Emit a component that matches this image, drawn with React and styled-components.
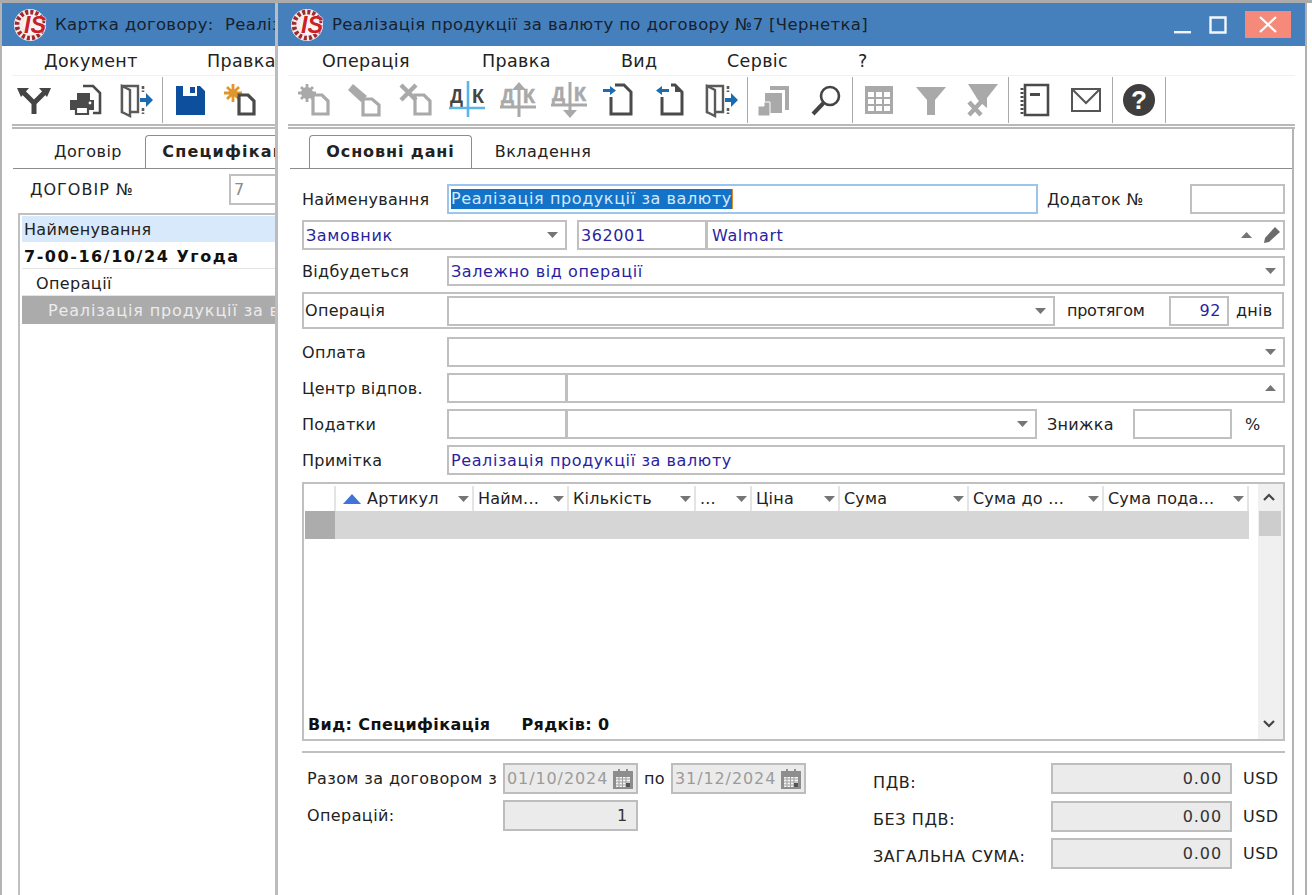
import React from "react";
import styled, { createGlobalStyle } from "styled-components";

const Global = createGlobalStyle`
  html, body { margin: 0; padding: 0; background: #fff; }
  body { font-family: "DejaVu Sans", Verdana, sans-serif; font-size: 16px; letter-spacing: .4px; color: #222; }
  * { box-sizing: border-box; }
`;

const Desktop = styled.div`
  position: relative; width: 1312px; height: 895px; overflow: hidden; background: #fff;
  border-top: 3px solid #ababab;
`;
const Window = styled.section`
  position: absolute; top: 0; bottom: -4px;
  left: ${p => p.$left}px; width: ${p => p.$width}px;
  background: #fff;
  border-left: ${p => p.$edgeW || 2}px solid ${p => p.$edge};
  ${p => p.$front ? "border-right: 2px solid #b0b0b0;" : ""}
  display: flex; flex-direction: column; overflow: hidden;
`;
const TitleBar = styled.header`
  height: 43px; background: #4680bc; display: flex; align-items: center; flex: none;
  padding-left: ${p => p.$pad}px; gap: 7px; color: #18212c; font-size: 16.5px; white-space: nowrap; overflow: hidden;
  letter-spacing: .35px;
`;
const TitleText = styled.span`flex: 1; min-width: 0; overflow: hidden;`;
const WinControls = styled.div`display: flex; align-items: center; margin-right: 14px; flex: none;`;
const WinBtn = styled.div`
  width: ${p => p.$w || 36}px; height: 27px; display: flex; align-items: center; justify-content: center;
  background: ${p => p.$bg || "transparent"};
  margin-left: ${p => p.$ml || 0}px;
`;
const MenuBar = styled.nav`
  height: 29px; flex: none; display: flex; align-items: center; position: relative;
  padding-left: ${p => p.$pad}px; font-size: 17.5px; white-space: nowrap; overflow: hidden;
  letter-spacing: .35px;
`;
const MenuItem = styled.span`
  width: ${p => p.$w}px; flex: none;
`;
const ToolRow = styled.div`
  margin: 0 ${p => p.$end || 0}px 0 ${p => p.$inset}px; flex: none; height: 54px; display: flex; align-items: center;
  border-top: 1px solid #f0f0f0;
  border-bottom: 5px double #b8b8b8;
  overflow: hidden; white-space: nowrap;
`;
const Tool = styled.div`
  width: ${p => p.$w || 51}px; height: 44px; display: flex; align-items: center; justify-content: center; flex: none;
`;
const ToolSep = styled.div`width: 1px; height: 46px; background: #a9a9a9; flex: none; margin: 0 ${p => p.$m || 0}px;`;
const Panel = styled.div`
  margin: 0 ${p => p.$end || 0}px 0 ${p => p.$inset}px; flex: 1; min-height: 0;
  ${p => p.$right ? "border-right: 2px solid #b4b4b4;" : ""}
  display: flex; flex-direction: column;
`;
const Tabs = styled.div`
  display: flex; align-items: flex-end; height: 35px; margin: 5px 0 0 ${p => p.$ml || 0}px; flex: none;
  padding-left: ${p => p.$pad}px; border-bottom: 1.5px solid #8c8c8c; position: relative; overflow: hidden;
`;
const Tab = styled.div`
  height: ${p => p.$on ? 35 : 32}px; width: ${p => p.$w}px; flex: none;
  font-weight: ${p => p.$on ? 700 : 400}; display: flex; align-items: center; justify-content: center;
  padding: 0 0 1px ${p => p.$pl || 0}px;
  letter-spacing: ${p => p.$ls || (p.$on ? ".9px" : ".5px")}; white-space: nowrap; overflow: hidden;
  ${p => p.$on ? "background:#fff; border:1.5px solid #8c8c8c; border-bottom:2px solid #fff; border-radius:4px 4px 0 0; margin-bottom:-1.5px;" : ""}
`;

const Form = styled.div`
  padding: 15px 7px 0 13px; display: flex; flex-direction: column; flex: 1;
`;
const Row = styled.div`
  display: grid; grid-template-columns: ${p => p.$cols}; height: 30px; margin-bottom: 6px;
  align-items: center; flex: none;
`;
const Label = styled.label`
  white-space: nowrap; padding-left: ${p => p.$pad || 0}px; letter-spacing: ${p => p.$ls || ".3px"};
`;
const Box = styled.div`
  height: 30px; border: 2px solid ${p => p.$focus ? "#9cc4ec" : "#c0c0c0"};
  ${p => p.$joined ? "border-left-width: 1px; padding-left: 4px !important;" : ""}
  display: flex; align-items: center; justify-content: ${p => p.$right ? "flex-end" : "flex-start"};
  padding: 0 ${p => p.$pr ?? 2}px 0 2px; color: #2a1fa0; white-space: nowrap; overflow: hidden; position: relative;
  letter-spacing: .6px;
`;
const BoxText = styled.span`flex: 1; min-width: 0;`;
const Selected = styled.span`background: #1273c9; color: #d6e9fb; height: 20px; line-height: 19px; border-right: 1px solid #e08a2e;`;
const Caret = styled.svg`width: 11px; height: 6px; flex: none; margin-right: ${p => p.$mr ?? 5}px; fill: #757575;`;
const Group = styled.div`
  height: 37px; border: 2px solid #c0c0c0; margin: 0 1px 8px 0; flex: none;
  display: grid; grid-template-columns: 143px 608px 114px 60px 1fr; align-items: center;
`;
const GroupLabel = styled.span`padding-left: 1px; letter-spacing: .3px;`;

const Table = styled.div`
  height: 259px; margin-top: 1px; border: 2px solid #c0c0c0; flex: none; display: grid; grid-template-columns: 1fr 25px; position: relative;
`;
const TableMain = styled.div`display: flex; flex-direction: column; padding: 2px 0 0 0; min-width: 0;`;
const HeadRow = styled.div`
  display: grid; grid-template-columns: 32px 138px 95px 127px 56px 88px 129px 135px 1fr; height: 25px; flex: none; padding-right: 9px;
  letter-spacing: .2px;
`;
const HeadCell = styled.div`
  display: flex; align-items: center; padding-left: ${p => p.$pad ?? 4}px; border-right: 2px solid #e4e4e4; white-space: nowrap; overflow: hidden; gap: ${p => p.$gap || 0}px;
`;
const HeadText = styled.span`flex: 1; min-width: 0;`;
const DataRow = styled.div`height: 28px; margin: 0 9px 0 1px; background: #d6d6d6; flex: none;`;
const RowMark = styled.div`width: 30px; height: 100%; background: #acacac;`;
const TableFoot = styled.div`
  margin-top: auto; height: 30px; padding: 0 0 0 4px; display: flex; gap: 31px; align-items: center; font-weight: 700; letter-spacing: .4px; color: #111;
`;
const Scroll = styled.div`
  background: #f0f0f0; display: flex; flex-direction: column; align-items: center; justify-content: space-between; padding: 0 3px 3px 0; position: relative;
`;
const ScrollBtn = styled.div`height: 25px; display: flex; align-items: center; justify-content: center; flex: none;`;
const ScrollThumb = styled.div`position: absolute; top: 27px; left: 1px; width: 22px; height: 25px; background: #cdcdcd;`;
const Divider = styled.hr`margin: 10px 0 10px; border: 0; height: 2px; background: #c0c0c0; width: 100%; flex: none;`;

const Summary = styled.div`display: grid; grid-template-columns: 571px 1fr; flex: none;`;
const SumLeft = styled.div`display: flex; flex-direction: column; gap: 6px; padding-left: 5px;`;
const SumRow = styled.div`display: flex; align-items: center; height: 31px;`;
const SumLabel = styled.span`width: 196px; flex: none; white-space: nowrap;`;
const SumMid = styled.span`width: 33px; flex: none; text-align: center;`;
const Ro = styled.div`
  width: ${p => p.$w || 135}px; height: 31px; background: #ebebeb; border: 2px solid #bdbdbd; flex: none;
  display: flex; align-items: center; justify-content: ${p => p.$date ? "space-between" : "flex-end"};
  padding: 0 ${p => p.$date ? 3 : 8}px 0 2px; color: ${p => p.$dim ? "#9b9b9b" : "#333"}; letter-spacing: .9px;
`;
const SumRight = styled.div`display: flex; flex-direction: column; gap: 6.5px;`;
const SumRightRow = styled.div`display: grid; grid-template-columns: 178px 181px 1fr; height: 31px; align-items: center;`;
const SumRLabel = styled.span`padding-top: ${p => p.$pt ?? 7}px; white-space: nowrap; letter-spacing: .6px;`;
const Usd = styled.span`padding-left: 11px; letter-spacing: .5px;`;

/* back window */
const BackForm = styled.div`display: flex; flex-direction: column; flex: 1; padding: 0 0 0 16px; white-space: nowrap; overflow: hidden;`;
const BackRow = styled.div`display: flex; align-items: center; height: 31px; margin-top: 5px; flex: none;`;
const BackLabel = styled.span`width: 211px; flex: none; padding-left: 12px; letter-spacing: 1px;`;
const BackInput = styled.div`width: 100px; height: 31px; flex: none; border: 2px solid #c0c0c0; color: #8a8a8a; padding: 3px; line-height: 22px;`;
const BackTree = styled.div`margin-top: 8px; border: 2px solid #c0c0c0; border-width: 2px 0 0 2px; flex: 1; display: flex; flex-direction: column; padding: 1px 0 0 2px;`;
const TreeHead = styled.div`height: 26px; background: #d8e9fb; display: flex; align-items: center; padding-left: 2px; flex: none; letter-spacing: .3px;`;
const TreeRow = styled.div`
  height: 27px; display: flex; align-items: center; flex: none; padding: 2px 0 0 ${p => p.$pad}px; border-bottom: 1px solid #e4e4e4;
  ${p => p.$bold ? "font-weight:700; color:#111; letter-spacing:1.55px;" : ""}
`;
const TreeSel = styled.div`
  height: 28px; background: #ababab; color: #ececec; display: flex; align-items: center; padding: 1px 0 0 26px; flex: none; letter-spacing: .85px;
`;

const Logo = () => (
  <svg width="34" height="34" viewBox="0 0 34 34" style={{ flex: "none" }}>
    <circle cx="16" cy="17" r="16" fill="#f4ecec" />
    <circle cx="16" cy="17" r="13" fill="none" stroke="#9c2a2e" strokeWidth="4.6" strokeDasharray="3 2.1" />
    <circle cx="19" cy="17" r="10" fill="#f8f4f4" />
    <text x="10" y="25" fontFamily="Liberation Sans" fontWeight="700" fontStyle="italic" fontSize="23" letterSpacing="0" textLength="22" lengthAdjust="spacingAndGlyphs" fill="#cc2029" stroke="#fff" strokeWidth=".6" paintOrder="stroke">IS</text>
  </svg>
);

const Doc = ({ c = "#4a4a4a", x = 16, y = 12, w = 15, h = 19 }) => (
  <path d={`M${x} ${y}h${w - 6}l6 6v${h - 6}h-${w}z`} fill="none" stroke={c} strokeWidth="3.2" />
);
const Ic = ({ children }) => <svg width="34" height="34" viewBox="0 0 34 34" overflow="visible">{children}</svg>;

const G = "#a9a9a9";
const IcFork = () => <Ic><path d="M17 31V20L6 9M17 20L28 9" fill="none" stroke="#444" strokeWidth="5" /><path d="M0 5h12l-8 9zM34 5H22l8 9z" fill="#444" /></Ic>;
const IcPrint = () => <Ic><path d="M15 3h10l7 7v20h-7" fill="none" stroke="#4a4a4a" strokeWidth="2.6" /><path d="M9 17V10h13v7zM2 17h24v10H2z" fill="#4a4a4a" /><path d="M8 24h12v7H8z" fill="#fff" stroke="#4a4a4a" strokeWidth="2.2" /><circle cx="22" cy="20" r="1.4" fill="#fff" /></Ic>;
const IcExit = () => <Ic><path d="M2 3h16v26H2z" fill="none" stroke="#5a5a5a" strokeWidth="2.4" /><path d="M2 3l8 4v26l-8-4z" fill="#fff" stroke="#5a5a5a" strokeWidth="2.4" /><path d="M23 3v6M23 25v6" stroke="#5a5a5a" strokeWidth="2.6" strokeDasharray="3 1.5" /><path d="M20 15h6v-5l7 7-7 7v-5h-6z" fill="#1c6bb0" /></Ic>;
const IcSave = () => <Ic><path d="M3 3h7v10h14V3h3l5 5v24H3z" fill="#0d4f9c" /><path d="M17 4h5v6h-5z" fill="#0d4f9c" /></Ic>;
const Star = ({ c }) => <g stroke={c} strokeWidth="2.8"><path d="M10 1v18M1 10h18M4 4l12 12M16 4L4 16" /></g>;
const IcNewStar = () => <Ic><Star c="#e0962a" /><circle cx="10" cy="10" r="3.5" fill="#e0962a" /><Doc /></Ic>;
const IcAdd = () => <Ic><Star c={G} /><circle cx="10" cy="10" r="6" fill={G} /><Doc c={G} /></Ic>;
const IcEdit = () => <Ic><path d="M5 1L0 7l13 12 6-6z" fill={G} /><path d="M15 16h9l7 6v10H15z" fill="none" stroke={G} strokeWidth="3.2" /></Ic>;
const IcDel = () => <Ic><path d="M2 2l15 15M17 2L2 17" stroke={G} strokeWidth="4.4" /><Doc c={G} /></Ic>;

const DkText = styled.text`font-family: "Liberation Sans", sans-serif; font-weight: 700; font-size: 20px; letter-spacing: 0;`;
const DkPair = ({ c, y, s }) => <><DkText x="0" y={y} fill={c} stroke={s} strokeWidth=".6" textLength="13" lengthAdjust="spacingAndGlyphs">Д</DkText><DkText x="22" y={y} fill={c} stroke={s} strokeWidth=".6" textLength="12" lengthAdjust="spacingAndGlyphs">К</DkText></>;
const IcDk = () => <Ic><DkPair c="#444" y="20" /><path d="M18 -2v36M-1 25h36" stroke="#5bb5e6" strokeWidth="2.6" /></Ic>;
const IcDkUp = () => <Ic><DkPair c={G} s={G} y="20" /><path d="M18 3v31M-1 24h36" stroke={G} strokeWidth="3" /><path d="M11 7l7-8 7 8z" fill={G} /></Ic>;
const IcDkDown = () => <Ic><DkPair c={G} s={G} y="18" /><path d="M18 -1v30M-1 22h36" stroke={G} strokeWidth="3" /><path d="M11 27l7 8 7-8z" fill={G} /></Ic>;
const DocOpen = ({ d }) => <path d={d} fill="none" stroke="#4a4a4a" strokeWidth="3" />;
const IcImp = () => <Ic><DocOpen d="M8 14v17h20V9l-7-7h-9" /><path d="M0 6h7V3l6 4.5L7 12V9H0z" fill="#1c6bb0" /></Ic>;
const IcExp = () => <Ic><DocOpen d="M8 14v17h20V9l-7-7h-4" /><path d="M21 9l7 0-7-7z" fill="#4a4a4a" /><path d="M15 6H8V3L2 7.5 8 12V9h7z" fill="#1c6bb0" /></Ic>;
const IcCopy = () => <Ic><path d="M13 3h19v24h-4V7H13z" fill={G} /><path d="M8 10h17v20H8z" fill={G} /><path d="M1 23h6v-4h6v14H1z" fill={G} stroke="#fff" /></Ic>;
const IcFind = () => <Ic><circle cx="21" cy="13" r="9" fill="none" stroke="#444" strokeWidth="2.6" /><path d="M14.5 20L4 31" stroke="#444" strokeWidth="4" /></Ic>;
const IcTable = () => <Ic><path d="M3 3h28v28H3z" fill={G} /><path d="M6 9h6v5H6zM14 9h6v5h-6zM22 9h6v5h-6zM6 16h6v5H6zM14 16h6v5h-6zM22 16h6v5h-6zM6 23h6v5H6zM14 23h6v5h-6zM22 23h6v5h-6z" fill="#fff" /></Ic>;
const IcFilter = () => <Ic><path d="M2 4h30L21 17v15h-8V17z" fill={G} /></Ic>;
const IcNoFilter = () => <Ic><path d="M3 1h30L22 15v10l-6-5-3-3z" fill={G} /><path d="M4 19l12 13M16 19L4 32" stroke={G} strokeWidth="4.4" /></Ic>;
const IcNote = () => <Ic><path d="M7 2h23v30H7z" fill="none" stroke="#4a4a4a" strokeWidth="2.6" /><path d="M12 10h10v3H12z" fill="#4a4a4a" /><path d="M4 5v26" stroke="#4a4a4a" strokeWidth="3" strokeDasharray="2 2" /></Ic>;
const IcMail = () => <Ic><path d="M3 6h28v22H3z" fill="none" stroke="#555" strokeWidth="2" /><path d="M3 6l14 14L31 6" fill="none" stroke="#555" strokeWidth="2" /></Ic>;
const HelpMark = styled.text`font-family: "Liberation Sans", sans-serif; font-weight: 700; font-size: 26px; letter-spacing: 0;`;
const IcHelp = () => <Ic><circle cx="17" cy="17" r="16" fill="#3e3e3e" /><HelpMark x="17" y="26" textAnchor="middle" fill="#fff">?</HelpMark></Ic>;
const IcCal = () => <svg width="20" height="20" viewBox="0 0 20 20"><path d="M0 2h20v18H0z" fill="#8d8d8d" /><path d="M3 8h14v10H3z" fill="#f4f4f4" /><path d="M3 10h14M3 13h14M3 16h14M6 8v10M9.5 8v10M13 8v10" stroke="#a0a0a0" /><path d="M13 14h4v4h-4z" fill="#555" /><path d="M5 0h2v4H5zM13 0h2v4h-2z" fill="#8d8d8d" /></svg>;
const IcPencil = () => <svg width="18" height="18" viewBox="0 0 18 18"><path d="M12 1l5 5L6 16l-5 1 1-5z" fill="#6b6b6b" /></svg>;
const Down = p => <Caret viewBox="0 0 11 6" {...p}><path d="M0 0h11L5.5 6z" /></Caret>;
const Up = p => <Caret viewBox="0 0 11 6" {...p}><path d="M0 6h11L5.5 0z" /></Caret>;

const BackMenu = [["Документ", 163], ["Правка", 68]];
const FrontMenu = [["Операція", 160], ["Правка", 139], ["Вид", 106], ["Сервіс", 131], ["?", 30]];
const Cols = ["Найм...", "Кількість", "...", "Ціна", "Сума", "Сума до ...", "Сума пода..."];

export default function App() {
  return (
    <>
      <Global />
      <Desktop>
        <Window $left={0} $width={277} $edge="#b4b4b4">
          <TitleBar $pad={12}>
            <Logo />
            <TitleText>Картка договору:&nbsp; Реаліз</TitleText>
          </TitleBar>
          <MenuBar $pad={42}>
            {BackMenu.map(([t, w]) => <MenuItem key={t} $w={w}>{t}</MenuItem>)}
          </MenuBar>
          <ToolRow $inset={10}>
            <Tool $w={44}><IcFork /></Tool>
            <Tool $w={58}><IcPrint /></Tool>
            <Tool $w={46}><IcExit /></Tool>
            <ToolSep $m={2} />
            <Tool $w={50}><IcSave /></Tool>
            <Tool $w={50}><IcNewStar /></Tool>
          </ToolRow>
          <Panel $inset={0}>
            <Tabs $pad={10} $ml={11}>
              <Tab $w={122} $pl={8}>Договір</Tab>
              <Tab $w={158} $on $ls="1.2px">Специфікац</Tab>
            </Tabs>
            <BackForm>
              <BackRow>
                <BackLabel>ДОГОВІР №</BackLabel>
                <BackInput>7</BackInput>
              </BackRow>
              <BackTree>
                <TreeHead>Найменування</TreeHead>
                <TreeRow $bold $pad={2}>7-00-16/10/24 Угода</TreeRow>
                <TreeRow $pad={14}>Операції</TreeRow>
                <TreeSel>Реалізація продукції за в</TreeSel>
              </BackTree>
            </BackForm>
          </Panel>
        </Window>

        <Window $left={275} $width={1032} $edge="#bcbcbc" $edgeW={3} $front>
          <TitleBar $pad={13}>
            <Logo />
            <TitleText>Реалізація продукції за валюту по договору №7 [Чернетка]</TitleText>
            <WinControls>
              <WinBtn><svg width="17" height="18" viewBox="0 0 17 18"><path d="M0 15h17v2.4H0z" fill="#f2f6fa" /></svg></WinBtn>
              <WinBtn><svg width="18" height="18" viewBox="0 0 18 18"><path d="M1.5 1.5h15v15h-15z" fill="none" stroke="#f2f6fa" strokeWidth="2.4" /></svg></WinBtn>
              <WinBtn $w={46} $ml={9} $bg="#f58a7b"><svg width="18" height="17" viewBox="0 0 18 17"><path d="M1 1l16 15M17 1L1 16" stroke="#fff" strokeWidth="2.2" /></svg></WinBtn>
            </WinControls>
          </TitleBar>
          <MenuBar $pad={44}>
            {FrontMenu.map(([t, w]) => <MenuItem key={t} $w={w}>{t}</MenuItem>)}
          </MenuBar>
          <ToolRow $inset={10} $end={10}>
            <Tool><IcAdd /></Tool>
            <Tool><IcEdit /></Tool>
            <Tool><IcDel /></Tool>
            <Tool><IcDk /></Tool>
            <Tool><IcDkUp /></Tool>
            <Tool><IcDkDown /></Tool>
            <Tool><IcImp /></Tool>
            <Tool><IcExp /></Tool>
            <Tool><IcExit /></Tool>
            <ToolSep />
            <Tool $w={52}><IcCopy /></Tool>
            <Tool $w={52}><IcFind /></Tool>
            <ToolSep />
            <Tool $w={52}><IcTable /></Tool>
            <Tool $w={51}><IcFilter /></Tool>
            <Tool $w={52}><IcNoFilter /></Tool>
            <ToolSep />
            <Tool $w={51}><IcNote /></Tool>
            <Tool $w={52}><IcMail /></Tool>
            <ToolSep />
            <Tool $w={52}><IcHelp /></Tool>
            <ToolSep />
          </ToolRow>
          <Panel $inset={11} $end={11} $right>
            <Tabs $pad={19} $ml={1}>
              <Tab $w={163} $on>Основні дані</Tab>
              <Tab $w={142}>Вкладення</Tab>
            </Tabs>
            <Form>
              <Row $cols="145px 591px 152px 1fr">
                <Label>Найменування</Label>
                <Box $focus><Selected>Реалізація продукції за валюту</Selected></Box>
                <Label $pad={9}>Додаток №</Label>
                <Box $pr={0} />
              </Row>
              <Row $cols="265px 10px 130px 1fr">
                <Box><BoxText>Замовник</BoxText><Down /></Box>
                <span />
                <Box><BoxText>362001</BoxText></Box>
                <Box $joined><BoxText>Walmart</BoxText><Up $mr={11} /><IcPencil /></Box>
              </Row>
              <Row $cols="145px 1fr">
                <Label>Відбудеться</Label>
                <Box><BoxText>Залежно від операції</BoxText><Down /></Box>
              </Row>
              <Group>
                <GroupLabel>Операція</GroupLabel>
                <Box><BoxText /><Down /></Box>
                <Label $pad={12} $ls="-.25px">протягом</Label>
                <Box $right $pr={6}>92</Box>
                <Label $pad={7}>днів</Label>
              </Group>
              <Row $cols="145px 1fr">
                <Label>Оплата</Label>
                <Box><BoxText /><Down /></Box>
              </Row>
              <Row $cols="145px 120px 1fr">
                <Label>Центр відпов.</Label>
                <Box />
                <Box $joined><BoxText /><Up /></Box>
              </Row>
              <Row $cols="145px 120px 470px 96px 99px 1fr">
                <Label>Податки</Label>
                <Box />
                <Box $joined><BoxText /><Down /></Box>
                <Label $pad={10}>Знижка</Label>
                <Box />
                <Label $pad={13}>%</Label>
              </Row>
              <Row $cols="145px 1fr">
                <Label>Примітка</Label>
                <Box><BoxText>Реалізація продукції за валюту</BoxText></Box>
              </Row>
              <Table>
                <TableMain>
                  <HeadRow>
                    <HeadCell $pad={0} />
                    <HeadCell $pad={7} $gap={6}>
                      <svg width="18" height="10" viewBox="0 0 18 10" style={{ flex: "none" }}><path d="M0 10h18L9 0z" fill="#3f73d6" /></svg>
                      <HeadText>Артикул</HeadText>
                      <Down $mr={3} />
                    </HeadCell>
                    {Cols.map(t => (
                      <HeadCell key={t}>
                        <HeadText>{t}</HeadText>
                        <Down $mr={3} />
                      </HeadCell>
                    ))}
                  </HeadRow>
                  <DataRow><RowMark /></DataRow>
                  <TableFoot><span>Вид: Специфікація</span><span>Рядків: 0</span></TableFoot>
                </TableMain>
                <Scroll>
                  <ScrollBtn><svg width="12" height="8" viewBox="0 0 12 8"><path d="M1 7l5-5 5 5" fill="none" stroke="#444" strokeWidth="2.2" /></svg></ScrollBtn>
                  <ScrollThumb />
                  <ScrollBtn><svg width="12" height="8" viewBox="0 0 12 8"><path d="M1 1l5 5 5-5" fill="none" stroke="#444" strokeWidth="2.2" /></svg></ScrollBtn>
                </Scroll>
              </Table>
              <Divider />
              <Summary>
                <SumLeft>
                  <SumRow>
                    <SumLabel>Разом за договором з</SumLabel>
                    <Ro $date $dim>01/10/2024<IcCal /></Ro>
                    <SumMid>по</SumMid>
                    <Ro $date $dim>31/12/2024<IcCal /></Ro>
                  </SumRow>
                  <SumRow>
                    <SumLabel>Операцій:</SumLabel>
                    <Ro>1</Ro>
                  </SumRow>
                </SumLeft>
                <SumRight>
                  <SumRightRow><SumRLabel>ПДВ:</SumRLabel><Ro $w={181}>0.00</Ro><Usd>USD</Usd></SumRightRow>
                  <SumRightRow><SumRLabel>БЕЗ ПДВ:</SumRLabel><Ro $w={181}>0.00</Ro><Usd>USD</Usd></SumRightRow>
                  <SumRightRow><SumRLabel $pt={6}>ЗАГАЛЬНА СУМА:</SumRLabel><Ro $w={181}>0.00</Ro><Usd>USD</Usd></SumRightRow>
                </SumRight>
              </Summary>
            </Form>
          </Panel>
        </Window>
      </Desktop>
    </>
  );
}
